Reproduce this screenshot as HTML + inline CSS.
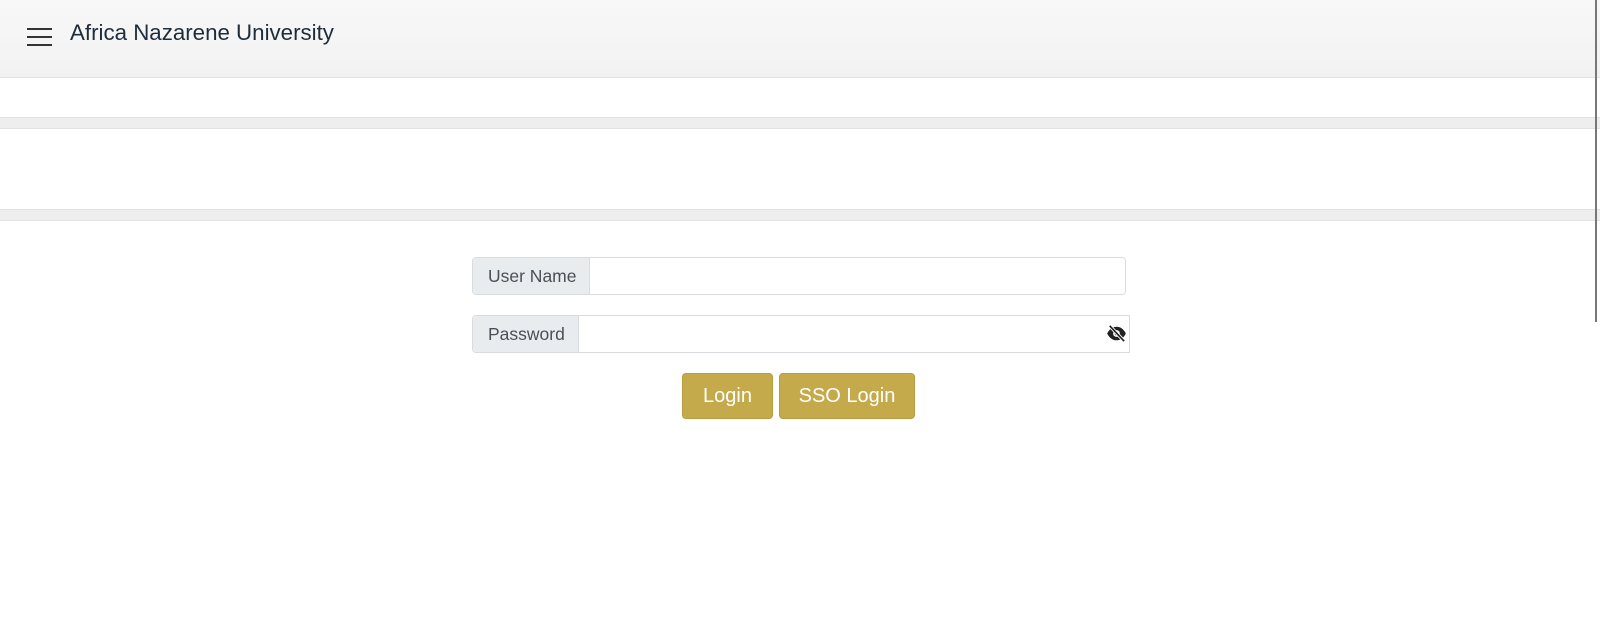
<!DOCTYPE html>
<html><head><meta charset="utf-8"><style>
*{box-sizing:border-box;margin:0;padding:0}
body{width:1600px;height:627px;overflow:hidden;background:#fff;font-family:"Liberation Sans",sans-serif;position:relative}
.hdr{position:absolute;left:0;top:0;width:1600px;height:78px;background:linear-gradient(#f8f8f8,#f2f2f2);border-bottom:1px solid #e2e2e2}
.ham{position:absolute;left:27px;top:28px;width:25px}
.ham i{display:block;height:2px;background:#333;margin-bottom:6px}
.title{position:absolute;left:70px;top:20px;font-size:22.3px;color:#1e2d3b}
.band{position:absolute;left:0;width:1600px;background:#eee;border-top:1px solid #e2e2e2;border-bottom:1px solid #e2e2e2}
.grp{position:absolute;left:472px;height:38px;border:1px solid #d8dbe0;border-radius:4px;background:#fff}
.lbl{position:absolute;left:0;top:0;height:36px;background:#e9ecef;border-right:1px solid #d8dbe0;color:#495057;font-size:17.5px;line-height:36px;padding:0 15px;border-radius:4px 0 0 4px;white-space:nowrap}
.btn{position:absolute;top:373px;height:46px;background:#c4aa4b;color:#fff;font-size:20px;line-height:44px;text-align:center;border-radius:4px;border:1px solid #b89d3d}
.sb{position:absolute;left:1595px;top:0;width:2px;height:322px;background:#777}
</style></head><body>
<div class="hdr"><div class="ham"><i></i><i></i><i></i></div><div class="title">Africa Nazarene University</div></div>
<div class="band" style="top:117px;height:12px"></div>
<div class="band" style="top:209px;height:12px"></div>
<div class="grp" style="top:257px;width:654px"><div class="lbl" style="width:117px">User Name</div></div>
<div class="grp" style="top:315px;width:658px;border-radius:4px 0 0 4px"><div class="lbl" style="width:106px">Password</div>
<svg style="position:absolute;left:633px;top:9px" width="21" height="17" viewBox="0 0 24 20"><path d="M1 10C4 4 8 2 12 2s8 2 11 8c-3 6-7 8-11 8S4 16 1 10z" fill="#222"/><circle cx="12" cy="10" r="4" fill="#fff"/><circle cx="12" cy="10" r="2.2" fill="#222"/><path d="M4 1l17 18" stroke="#fff" stroke-width="4"/><path d="M4 1l17 18" stroke="#222" stroke-width="2"/></svg></div>
<div class="btn" style="left:682px;width:91px">Login</div>
<div class="btn" style="left:779px;width:136px">SSO Login</div>
<div class="sb"></div>
</body></html>
